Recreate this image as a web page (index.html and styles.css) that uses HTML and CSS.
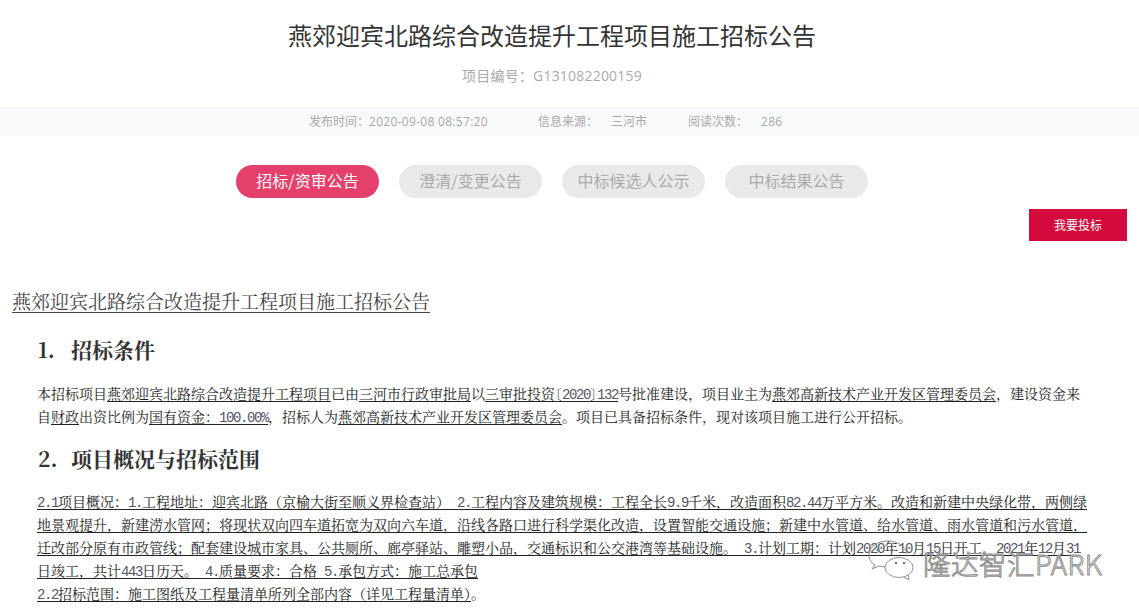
FILE: index.html
```html
<!DOCTYPE html>
<html lang="zh-CN">
<head>
<meta charset="utf-8">
<title>燕郊迎宾北路综合改造提升工程项目施工招标公告</title>
<link rel="stylesheet" href="styles.css">
</head>
<body>
<header class="head">
  <h1 class="title">燕郊迎宾北路综合改造提升工程项目施工招标公告</h1>
  <div class="code">项目编号：G131082200159</div>
</header>
<div class="meta">
  <div class="meta-in">
    <span class="m1">发布时间：<span class="lat">2020-09-08 08:57:20</span></span>
    <span class="m2">信息来源：</span><span class="m3">三河市</span>
    <span class="m2 m4">阅读次数：</span><span class="m3 lat">286</span>
  </div>
</div>
<nav class="tabs">
  <a class="tab on">招标/资审公告</a>
  <a class="tab">澄清/变更公告</a>
  <a class="tab">中标候选人公示</a>
  <a class="tab">中标结果公告</a>
</nav>
<div class="act"><a class="btn">我要投标</a></div>
<main class="doc">
  <h2 class="doc-title">燕郊迎宾北路综合改造提升工程项目施工招标公告</h2>
  <h3 class="sec"><span class="no">1.</span>招标条件</h3>
  <p class="para">本招标项目<u>燕郊迎宾北路综合改造提升工程项目</u>已由<u>三河市行政审批局</u>以<u>三审批投资<span class="bl">〔</span><span class="n">2020</span><span class="br">〕</span><span class="n">132</span></u>号批准建设，项目业主为<u>燕郊高新技术产业开发区管理委员会</u>，建设资金来<br>自<u>财政</u>出资比例为<u>国有资金：<span class="n">100.00%</span></u>，招标人为<u>燕郊高新技术产业开发区管理委员会</u>。项目已具备招标条件，现对该项目施工进行公开招标。</p>
  <h3 class="sec sec2"><span class="no">2.</span>项目概况与招标范围</h3>
  <p class="para para2"><u><span class="n">2.1</span>项目概况：<span class="n">1.</span>工程地址：迎宾北路（京榆大街至顺义界检查站）<span class="n"> 2.</span>工程内容及建筑规模：工程全长<span class="n">9.9</span>千米，改造面积<span class="n">82.44</span>万平方米。改造和新建中央绿化带，两侧绿<br>地景观提升，新建涝水管网；将现状双向四车道拓宽为双向六车道，沿线各路口进行科学渠化改造，设置智能交通设施；新建中水管道、给水管道、雨水管道和污水管道，<br>迁改部分原有市政管线；配套建设城市家具、公共厕所、廊亭驿站、雕塑小品，交通标识和公交港湾等基础设施。<span class="n"> 3.</span>计划工期：计划<span class="n">2020</span>年<span class="n">10</span>月<span class="n">15</span>日开工，<span class="n">2021</span>年<span class="n">12</span>月<span class="n">31</span><br>日竣工，共计<span class="n">443</span>日历天。<span class="n"> 4.</span>质量要求：合格<span class="n"> 5.</span>承包方式：施工总承包</u><br><u><span class="n">2.2</span>招标范围：施工图纸及工程量清单所列全部内容（详见工程量清单）</u>。</p>
</main>
<div class="mark">
  <svg class="wx" viewBox="0 0 46 41" width="46" height="41" aria-hidden="true">
    <path d="M39 14C37 6 29 1 20 1 9 1 1 7 1 15c0 4 2 8 6 10l-3 4 7-3c2 .5 4 .8 6 .8" />
    <ellipse cx="31" cy="27.500" rx="14" ry="10" />
    <path d="M36 37l5 3-.5-5" />
    <circle class="dot" cx="10" cy="10" r="1.500" />
    <circle class="dot" cx="24" cy="10" r="1.500" />
    <circle class="dot" cx="28" cy="23" r="1.300" />
    <circle class="dot" cx="36" cy="23" r="1.300" />
  </svg>
  <span class="mark-text">隆达智汇PARK</span>
</div>
</body>
</html>
```
FILE: styles.css
```css
* { box-sizing: border-box; }
html, body { margin: 0; padding: 0; }
body {
  width: 1139px;
  height: 612px;
  overflow: hidden;
  position: relative;
  background: #fff;
  color: #333;
  font-family: "Noto Sans CJK SC", "Liberation Sans", sans-serif;
}
.head { width: 1104px; text-align: center; padding-top: 18px; }
.title { margin: 0; font-size: 24px; font-weight: 400; line-height: 34px; color: #333; }
.code { margin-top: 14px; font-size: 14px; line-height: 20px; letter-spacing: .2px; color: #aaa; font-family: "Open Sans", "Noto Sans CJK SC", sans-serif; }
.meta { margin-top: 21px; height: 29px; background: #f7f9fa; }
.meta-in { display: flex; align-items: center; height: 29px; padding: 0 0 1px 309px; font-size: 12px; color: #aaa; font-family: "Open Sans", "Noto Sans CJK SC", sans-serif; }
.lat { letter-spacing: .3px; }
.m1 { width: 229px; }
.m2 { width: 73px; }
.m3 { width: 77px; }
.m4 { width: 73px; }
.tabs { display: flex; gap: 20px; padding-left: 236px; margin-top: 29px; }
.tab {
  width: 143px; height: 33px; border-radius: 17px; padding-bottom: 3px;
  display: flex; align-items: center; justify-content: center;
  font-size: 16px; background: #e9e9e9; color: #aaa;
}
.tab.on { background: #e5406b; color: #fff; }
.act { display: flex; justify-content: flex-end; padding-right: 12px; margin-top: 11px; }
.btn {
  width: 98px; height: 32px; padding-bottom: 1px; background: #d40a3c; color: #fff;
  font-size: 12px; display: flex; align-items: center; justify-content: center;
}
.doc { padding: 0 12px; font-family: "Noto Serif CJK SC", "Noto Sans CJK SC", serif; }
.doc-title {
  margin: 46px 0 0; font-size: 19px; line-height: 28px; font-weight: 400;
  color: #444; text-decoration: underline; text-underline-offset: 3px; text-decoration-skip-ink: none;
}
.sec { margin: 19px 0 0 26px; font-size: 21px; line-height: 30px; font-weight: 700; color: #333; display: flex; }
.no { width: 33px; }
.sec2 { margin-top: 15px; }
.para { margin: 18px 0 0 25px; font-size: 14px; line-height: 23px; white-space: pre; color: #222; }
.para2 { margin-top: 17px; }
.para u { text-underline-offset: 2px; text-decoration-skip-ink: none; }
.n { font-family: "Liberation Mono", monospace; font-size: 14px; letter-spacing: -1.400px; line-height: 1; color: #556; }
.bl { margin-left: -7px; }
.br { margin-right: -7px; }
.mark { position: absolute; left: 868px; top: 540px; display: flex; align-items: flex-end; gap: 9px; }
.wx path { fill: none; stroke: #8f8f8f; stroke-width: 1; }
.wx ellipse { fill: rgba(255,255,255,.75); stroke: #8f8f8f; stroke-width: 1; }
.wx .dot { fill: #7a7a7a; }
.mark-text {
  font-size: 27.500px; line-height: 36px; letter-spacing: .5px; color: rgba(255,255,255,.75);
  -webkit-text-stroke: 1px #8f8f8f; font-family: "Noto Sans CJK SC", sans-serif; font-weight: 300;
}
```
